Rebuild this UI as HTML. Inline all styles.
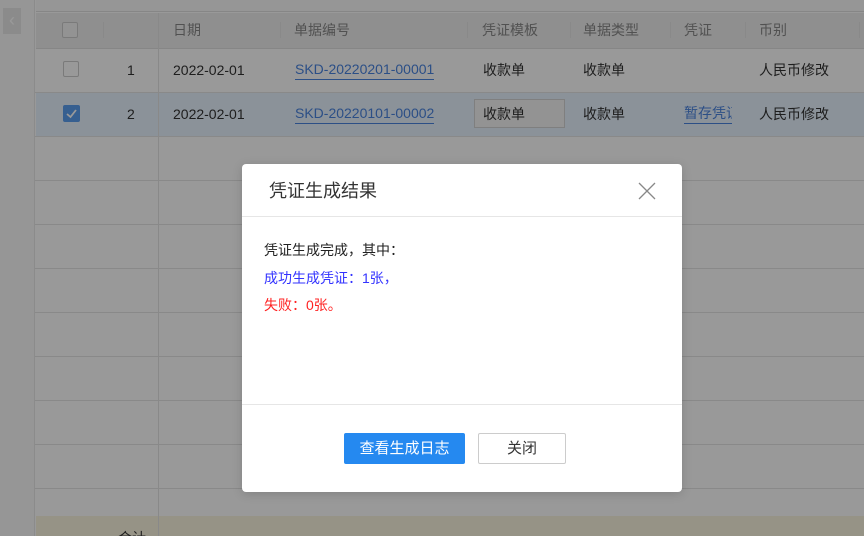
<!DOCTYPE html>
<html><head><meta charset="utf-8"><style>
*{margin:0;padding:0;box-sizing:border-box}
html,body{width:864px;height:536px;overflow:hidden}
body{background:#fff;font-family:"Liberation Sans","Noto Sans CJK SC",sans-serif;font-size:14px;color:#333;position:relative}
.a{position:absolute}
.hl{position:absolute;left:35px;right:0;height:1px;background:#e4e4e4}
.vl{position:absolute;width:1px;background:#e4e4e4}
.t{position:absolute;white-space:nowrap;line-height:20px}
</style></head><body>
<div class="a" style="left:0;top:0;width:35px;height:536px;background:#fafafa;border-right:1px solid #e8e8e8"></div>
<div class="a" style="left:3px;top:8px;width:18px;height:26px;background:#e8e8e8;color:#fff;font-size:18px;text-align:center;line-height:24px">‹</div>
<div class="a" style="left:36px;top:0;width:828px;height:12px;background:#fafafa;border-bottom:1px solid #e0e0e0"></div>
<div class="a" style="left:36px;top:13px;width:828px;height:36px;background:#efefef;border-bottom:1px solid #e0e0e0"></div>
<div class="a" style="left:36px;top:93px;width:828px;height:44px;background:#e8f3ff"></div>
<div class="hl" style="top:92px"></div><div class="hl" style="top:136px"></div>
<div class="hl" style="top:180px"></div><div class="hl" style="top:224px"></div>
<div class="hl" style="top:268px"></div><div class="hl" style="top:312px"></div>
<div class="hl" style="top:356px"></div><div class="hl" style="top:400px"></div>
<div class="hl" style="top:444px"></div><div class="hl" style="top:488px"></div>
<div class="a" style="left:36px;top:516px;width:828px;height:20px;background:#fbf6df"></div>
<div class="vl" style="left:158px;top:13px;height:523px"></div>
<div class="vl" style="left:103px;top:22px;height:16px"></div>
<div class="vl" style="left:280px;top:22px;height:16px"></div>
<div class="vl" style="left:467px;top:22px;height:16px"></div>
<div class="vl" style="left:570px;top:22px;height:16px"></div>
<div class="vl" style="left:670px;top:22px;height:16px"></div>
<div class="vl" style="left:745px;top:22px;height:16px"></div>
<div class="vl" style="left:859px;top:22px;height:16px"></div>
<div class="a" style="left:62px;top:22px;width:16px;height:16px;border:1px solid #ccc;border-radius:2px;background:#f5f5f5"></div>
<div class="a" style="left:63px;top:61px;width:16px;height:16px;border:1px solid #ccc;border-radius:2px;background:#fff"></div>
<div class="a" style="left:63px;top:105px;width:17px;height:17px;border-radius:2px;background:#5a9ef0"></div>
<svg class="a" style="left:63px;top:105px" width="17" height="17"><path d="M4 9L7.5 12L13 5" stroke="#fff" stroke-width="1.8" fill="none"/></svg>
<div class="t" style="left:173px;top:20px;color:#888">日期</div>
<div class="t" style="left:294px;top:20px;color:#888">单据编号</div>
<div class="t" style="left:482px;top:20px;color:#888">凭证模板</div>
<div class="t" style="left:583px;top:20px;color:#888">单据类型</div>
<div class="t" style="left:684px;top:20px;color:#888">凭证</div>
<div class="t" style="left:759px;top:20px;color:#888">币别</div>
<div class="t" style="left:127px;top:60px">1</div>
<div class="t" style="left:127px;top:104px">2</div>
<div class="t" style="left:173px;top:60px">2022-02-01</div>
<div class="t" style="left:173px;top:104px">2022-02-01</div>
<div class="t" style="left:295px;top:59px;color:#4a84e0;border-bottom:1px solid #4a84e0">SKD-20220201-00001</div>
<div class="t" style="left:295px;top:103px;color:#4a84e0;border-bottom:1px solid #4a84e0">SKD-20220101-00002</div>
<div class="t" style="left:483px;top:60px">收款单</div>
<div class="a" style="left:474px;top:99px;width:91px;height:29px;border:1px solid #d4d4d4;background:#f5f5f5"></div>
<div class="t" style="left:483px;top:104px">收款单</div>
<div class="t" style="left:583px;top:60px">收款单</div>
<div class="t" style="left:583px;top:104px">收款单</div>
<div class="t" style="left:684px;top:103px;width:48px;overflow:hidden;color:#4a84e0;border-bottom:1px solid #4a84e0">暂存凭证</div>
<div class="t" style="left:759px;top:60px">人民币修改</div>
<div class="t" style="left:759px;top:104px">人民币修改</div>
<div class="t" style="left:118px;top:528px">合计</div>

<div class="a" style="left:0;top:0;width:864px;height:536px;background:rgba(0,0,0,.4)"></div>

<div class="a" style="left:242px;top:164px;width:440px;height:328px;background:#fff;border-radius:4px;box-shadow:0 2px 10px rgba(0,0,0,.15)">
 <div class="t" style="left:27px;top:15px;font-size:18px;line-height:24px;color:#333">凭证生成结果</div>
 <svg class="a" style="left:396px;top:18px" width="18" height="18" viewBox="0 0 18 18"><path d="M1 1L17 17M17 1L1 17" stroke="#888" stroke-width="1.3" fill="none"/></svg>
 <div class="a" style="left:0;top:52px;width:440px;height:1px;background:#e6e6e6"></div>
 <div class="t" style="left:22px;top:76px;color:#222">凭证生成完成，其中：</div>
 <div class="t" style="left:22px;top:104px;color:#3333ff">成功生成凭证：1张，</div>
 <div class="t" style="left:22px;top:131px;color:#ff2222">失败：0张。</div>
 <div class="a" style="left:0;top:240px;width:440px;height:1px;background:#e6e6e6"></div>
 <div class="a" style="left:102px;top:269px;width:121px;height:31px;background:#2589f0;border-radius:2px;color:#fff;font-size:15px;text-align:center;line-height:31px">查看生成日志</div>
 <div class="a" style="left:236px;top:269px;width:88px;height:31px;border:1px solid #ccc;border-radius:2px;color:#333;font-size:15px;text-align:center;line-height:29px">关闭</div>
</div>
</body></html>
